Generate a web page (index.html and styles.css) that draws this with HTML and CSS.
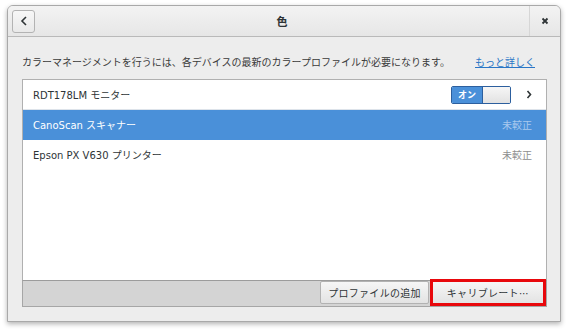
FILE: index.html
```html
<!DOCTYPE html>
<html lang="ja">
<head>
  <meta charset="UTF-8">
  <title>色</title>
  <link rel="stylesheet" href="styles.css">
</head>
<body>

  <div class="window">
    <div class="header">
      <button class="back-btn">
        <svg width="8" height="10" viewBox="0 0 8 10"><path d="M6 1 L2 5 L6 9" fill="none" stroke="#2e3436" stroke-width="1.6"/></svg>
      </button>
      <div class="title">色</div>
      <div class="close-area">
        <svg width="8" height="8" viewBox="0 0 8 8"><path d="M1.5 1.5 L6.5 6.5 M6.5 1.5 L1.5 6.5" stroke="#2e3436" stroke-width="1.8"/></svg>
      </div>
    </div>

    <div class="content">
      <div class="info">
        <span>カラーマネージメントを行うには、各デバイスの最新のカラープロファイルが必要になります。</span>
        <a href="#">もっと詳しく</a>
      </div>

      <div class="list">
        <div class="row">
          <span class="name">RDT178LM モニター</span>
          <div class="switch"><span class="on">オン</span><span class="knob"></span></div>
          <svg class="chevron" width="6" height="9" viewBox="0 0 6 9"><path d="M1.5 1 L4.5 4.5 L1.5 8" fill="none" stroke="#2e3436" stroke-width="1.6"/></svg>
        </div>
        <div class="row selected">
          <span class="name">CanoScan スキャナー</span>
          <span class="status">未較正</span>
        </div>
        <div class="row">
          <span class="name">Epson PX V630 プリンター</span>
          <span class="status">未較正</span>
        </div>
      </div>

      <div class="toolbar">
        <button class="tool-btn add">プロファイルの追加</button>
        <button class="tool-btn calibrate">キャリブレート⋯</button>
      </div>
    </div>
  </div>

</body>
</html>
```

FILE: styles.css
```css
body {
  margin: 0;
  padding: 5px 8px 10px 7px;
  background: #ffffff;
  font-family: "DejaVu Sans", "Noto Sans CJK JP", sans-serif;
  font-size: 10px;
  color: #2e3436;
}
.window {
  width: 552px;
  height: 315px;
  border: 1px solid #a9a9a9;
  border-radius: 6px 6px 0 0;
  background: #ededed;
  box-shadow: 0 2px 5px rgba(0, 0, 0, 0.3);
  display: flex;
  flex-direction: column;
  overflow: hidden;
}
.header {
  height: 30px;
  display: flex;
  align-items: center;
  background: linear-gradient(#f3f3f3, #e6e6e6);
  border-bottom: 1px solid #b9b9b9;
}
.back-btn {
  width: 23px;
  height: 23px;
  margin-left: 4px;
  padding: 0;
  display: flex;
  align-items: center;
  justify-content: center;
  border: 1px solid #b3b3b3;
  border-radius: 3px;
  background: linear-gradient(#f7f7f7, #e9e9e9);
}
.title {
  flex: 1;
  text-align: center;
  font-weight: bold;
  font-size: 11px;
}
.close-area {
  width: 30px;
  height: 30px;
  display: flex;
  align-items: center;
  justify-content: center;
  border-left: 1px solid #d6d6d6;
}
.content {
  flex: 1;
  display: flex;
  flex-direction: column;
  padding: 14px 13px 14px 14px;
}
.info {
  display: flex;
  justify-content: space-between;
  align-items: center;
  height: 20px;
  padding-right: 12px;
  margin-bottom: 8px;
  color: #3a3a3a;
}
.info a {
  color: #2a76c6;
  text-decoration: underline;
}
.list {
  flex: 1;
  background: #ffffff;
  border: 1px solid #b0b0b0;
  border-bottom: none;
}
.row {
  height: 29px;
  display: flex;
  align-items: center;
  padding: 0 14px 0 10px;
  border-bottom: 1px solid #dde3ea;
}
.row:last-child {
  border-bottom: none;
}
.row .name {
  flex: 1;
}
.status {
  color: #8e8e8e;
}
.row.selected {
  background: #4a90d9;
  color: #ffffff;
  border-bottom-color: #4a90d9;
}
.row.selected .status {
  color: #a9c9ee;
}
.switch {
  display: flex;
  width: 58px;
  height: 16px;
  border: 1px solid #2c5f9e;
  border-radius: 2px;
  overflow: hidden;
}
.switch .on {
  width: 30px;
  background: #4a90d9;
  color: #ffffff;
  font-weight: bold;
  font-size: 9px;
  display: flex;
  align-items: center;
  justify-content: center;
}
.switch .knob {
  flex: 1;
  background: linear-gradient(#f6f6f6, #e2e2e2);
  border-left: 1px solid #2c5f9e;
}
.chevron {
  margin-left: 15px;
}
.toolbar {
  height: 25px;
  display: flex;
  justify-content: flex-end;
  align-items: flex-start;
  background: #d4d4d4;
  border: 1px solid #a6a6a6;
  border-top-color: #9c9c9c;
}
.tool-btn {
  height: 23px;
  padding: 0;
  font-family: "DejaVu Sans", "Noto Sans CJK JP", sans-serif;
  font-size: 10px;
  letter-spacing: 0.3px;
  color: #2e3436;
  border: 1px solid #b2b2b2;
  border-radius: 2px;
  background: linear-gradient(#f6f6f6, #e3e3e3);
}
.tool-btn.add {
  width: 109px;
}
.tool-btn.calibrate {
  width: 112px;
  margin-left: 3px;
  margin-right: 2px;
  border-radius: 0;
  outline: 3px solid #e8080c;
  outline-offset: -1px;
}
```
